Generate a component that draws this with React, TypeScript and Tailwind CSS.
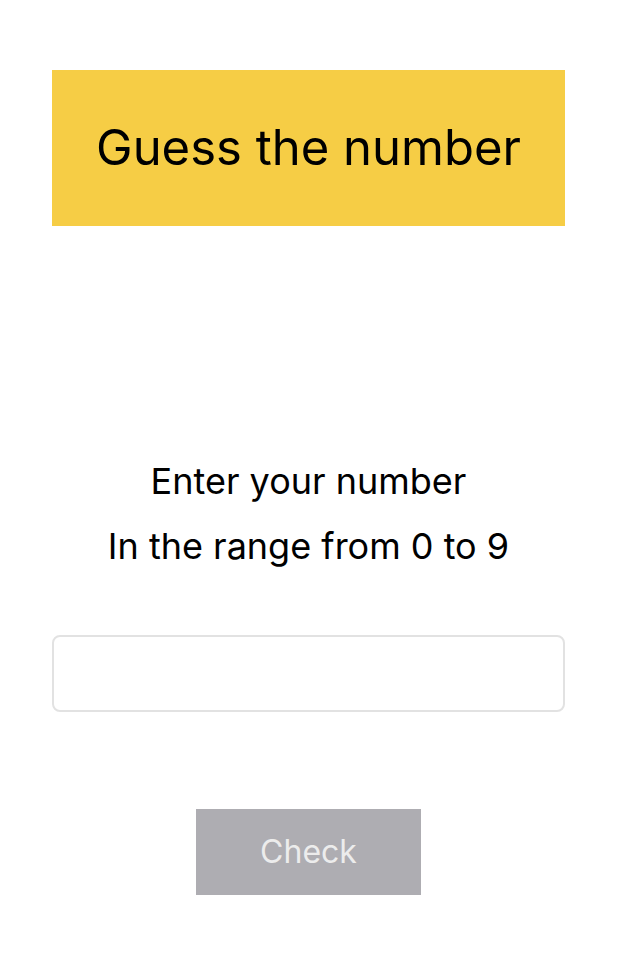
export default function App() {
    return (
        <div className="min-h-screen bg-white pl-[52px] pr-[57px] pt-[70px] flex flex-col items-stretch" style={{ fontFamily: 'Inter, "Liberation Sans", Arial, sans-serif' }}>
            <header className="h-[156px] bg-[#f6cd45] flex items-center justify-center">
                <h1 className="text-[49px] text-black">Guess the number</h1>
            </header>
            <section className="mt-[223px] flex flex-col items-center text-[36px] leading-[65px] text-black">
                <p>Enter your number</p>
                <p>In the range from 0 to 9</p>
            </section>
            <input
                type="text"
                className="mt-[56px] h-[77px] rounded-[8px] border-2 border-[#e2e2e2] bg-white px-4 text-[32px] outline-none"
            />
            <div className="mt-[97px] flex justify-center">
                <button className="w-[225px] h-[86px] bg-[#aeadb2] text-[32px] text-[#ececec]">Check</button>
            </div>
        </div>
    );
}
